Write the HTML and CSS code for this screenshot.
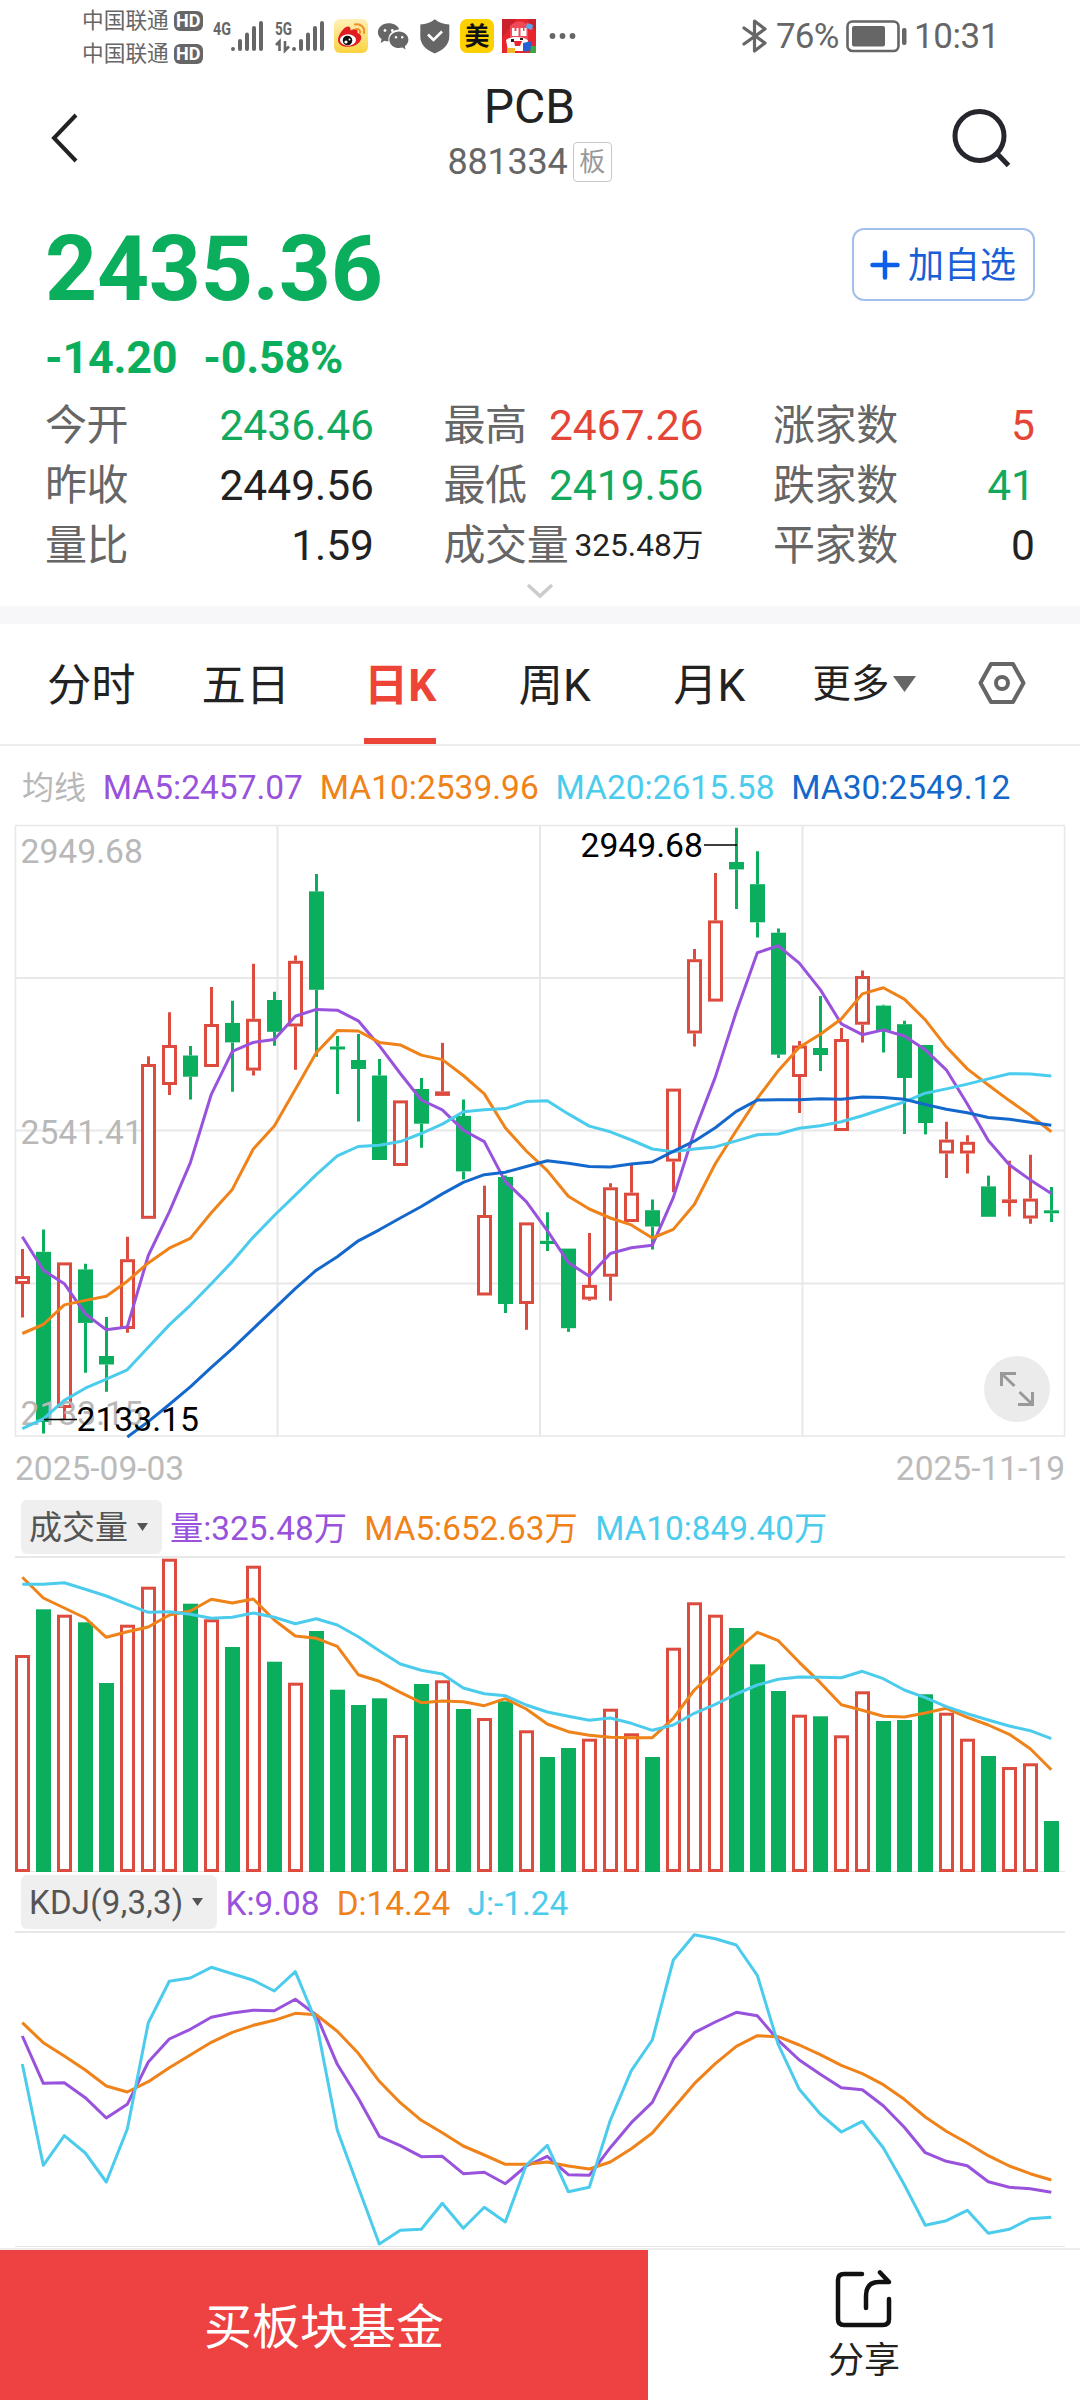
FILE: index.html
```html
<!DOCTYPE html>
<html lang="zh-CN">
<head>
<meta charset="utf-8">
<title>PCB 881334</title>
<link rel="stylesheet" href="styles.css">
</head>
<body>
<div class="screen">
  <div class="status">
    <div class="carriers">
      <div class="carrier">中国联通<span class="hd">HD</span></div>
      <div class="carrier">中国联通<span class="hd">HD</span></div>
    </div>
    <svg class="status-icons" width="370" height="72" viewBox="210 0 370 72">
      <g class="net">
        <text x="213" y="35" textLength="18" lengthAdjust="spacingAndGlyphs">4G</text>
        <text x="275" y="35" textLength="17" lengthAdjust="spacingAndGlyphs">5G</text>
      </g>
      <g class="signal">
        <path d="M233 49v0M240 41v8M247 34.500v14.500M254 28v21M261 23v26"/>
        <path d="M294 49v0M301 41v8M308 34.500v14.500M315 28v21M322 23v26"/>
      </g>
      <path class="thin" d="M276 45l3.500-3.500V51M285 41v9.500l4-4"/>
      <defs>
        <linearGradient id="gold" x1="0" y1="0" x2="0" y2="1"><stop offset="0" stop-color="#fff0b8"/><stop offset="1" stop-color="#fbd33f"/></linearGradient>
      </defs>
      <rect x="334" y="19" width="34" height="34" rx="6" fill="url(#gold)"/>
      <path fill="#e01c20" d="M346 27c3-1.500 5 0 4.500 3.500 4-2 8-1.500 7 2.500 5 1.500 5 7 .5 10.500-6 5-19.500 4.500-20-3-.2-4.500 4-11 8-13.500z"/>
      <ellipse cx="348" cy="40" rx="8" ry="5.800" fill="#fff"/>
      <circle cx="347.500" cy="40.500" r="4.800" fill="#111"/><circle cx="346" cy="42" r="1.600" fill="#fff"/><circle cx="349.500" cy="39.500" r="1" fill="#fff"/>
      <path fill="none" stroke="#f0902c" stroke-width="2" stroke-linecap="round" d="M355 24.500c6-1 10 3 9 8.500M356 29c3-.5 4.500 1.500 4 4"/>
      <path class="gray" d="M388.500 23.200c-6 0-10.600 4-10.600 9 0 2.800 1.400 5.200 3.700 6.900l-1 3.800 4-2.200c1.200.4 2.500.5 3.900.5-.9-6.500 4-11.500 10.700-11.600-.9-3.800-5.300-6.400-10.700-6.400z"/>
      <path class="gray" d="M399 31.500c-5.500 0-9.600 3.700-9.600 8.300 0 4.600 4.300 8.300 9.600 8.300 1.200 0 2.300-.2 3.400-.5l3.200 1.900-.8-3.300c2.200-1.500 3.600-3.800 3.600-6.400 0-4.600-4-8.300-9.400-8.300z"/>
      <g fill="#fff"><circle cx="385" cy="30.500" r="1.400"/><circle cx="392.300" cy="30.500" r="1.400"/><circle cx="396" cy="37.200" r="1.200"/><circle cx="402.200" cy="37.200" r="1.200"/></g>
      <path class="gray" d="M434.800 19.200c4 3.300 8.800 5 14.500 5.400v12c0 8-6 13.500-14.500 16.900-8.500-3.400-14.500-8.900-14.500-16.900v-12c5.700-.4 10.500-2.100 14.500-5.400z"/>
      <path fill="none" stroke="#fff" stroke-width="2.600" d="M428 34.500l5.500 5.500 8.500-8.500"/>
      <rect x="460" y="19" width="34" height="34" rx="7" fill="#fdd000"/>
      <text class="mei" x="477" y="45" text-anchor="middle">美</text>
      <rect x="502" y="19" width="34" height="34" fill="#e8242c"/>
      <path fill="#c9222c" d="M502 19h14l-8 11-6 8zM527 19h9v12z"/>
      <path fill="#f04a58" d="M510 26c6-6 14-6 18 0v13h-18z"/>
      <path fill="#fff" d="M512 28h2.500v3h2v-3h2v8H512zM520.500 28h2.500v3h1.500v-3h2v8h-6z"/>
      <path fill="#fff" d="M506 40c4-4 16-4 22 0l-2 11h-18z"/>
      <path fill="#e8242c" d="M514 41h8l-2 5h-5z"/><path fill="#222" d="M511 39h3v3h-3zM520 38h3v2h-3z"/>
      <path fill="#2360d0" d="M523 43l9-2v9l-9 2z"/><path fill="#58a8ee" d="M527 23l6 2-1 5-6-2z"/><path fill="#39a845" d="M531 46h5v7h-6z"/><path fill="#f2b929" d="M507 48h8v5h-8z"/>
      <g class="gray"><circle cx="552.500" cy="36" r="2.900"/><circle cx="562.500" cy="36" r="2.900"/><circle cx="572.500" cy="36" r="2.900"/></g>
    </svg>
    <div class="status-right">
      <svg width="26" height="36" viewBox="0 0 26 36"><path fill="none" stroke="#666" stroke-width="3.200" stroke-linejoin="round" stroke-linecap="round" d="M2 10l21 15-10.500 8V3L23 11 2 26"/></svg>
      <span class="pct">76%</span>
      <svg class="battery" width="62" height="36" viewBox="0 0 62 36"><rect x="1.500" y="3.500" width="51" height="29.500" rx="5" fill="none" stroke="#666" stroke-width="2.600"/><rect x="6" y="8" width="33" height="20.500" rx="2" fill="#666"/><rect x="56" y="10" width="4.500" height="17" rx="2" fill="#666"/></svg>
      <span class="time">10:31</span>
    </div>
  </div>

  <header class="header">
    <svg class="back" width="34" height="56" viewBox="0 0 34 56"><path fill="none" stroke="#222" stroke-width="4" d="M29 5L7 28l22 23"/></svg>
    <div class="title-block">
      <div class="title">PCB</div>
      <div class="sub">881334<span class="badge">板</span></div>
    </div>
    <svg class="search" width="66" height="66" viewBox="0 0 66 66"><circle cx="31.500" cy="31" r="24.500" fill="none" stroke="#26272e" stroke-width="5"/><path stroke="#26272e" stroke-width="5" d="M48 47.500L60.500 60.500"/></svg>
  </header>

  <section class="quote">
    <div class="price-row">
      <div class="price">2435.36</div>
      <div class="add"><svg width="30" height="30" viewBox="0 0 30 30"><path stroke="#0b5fe8" stroke-width="4.500" stroke-linecap="round" d="M15 2.500v25M2.500 15h25"/></svg><span>加自选</span></div>
    </div>
    <div class="change"><span>-14.20</span><span>-0.58%</span></div>
    <div class="stats">
      <div class="stat"><span>今开</span><b class="down">2436.46</b></div>
      <div class="stat"><span>最高</span><b class="up">2467.26</b></div>
      <div class="stat"><span>涨家数</span><b class="up">5</b></div>
      <div class="stat"><span>昨收</span><b>2449.56</b></div>
      <div class="stat"><span>最低</span><b class="down">2419.56</b></div>
      <div class="stat"><span>跌家数</span><b class="down">41</b></div>
      <div class="stat"><span>量比</span><b>1.59</b></div>
      <div class="stat"><span>成交量</span><b class="small">325.48万</b></div>
      <div class="stat"><span>平家数</span><b>0</b></div>
    </div>
    <div class="more-row"><svg width="30" height="18" viewBox="0 0 30 18"><path fill="none" stroke="#ccc" stroke-width="3.600" d="M3 3l12 11L27 3"/></svg></div>
  </section>

  <nav class="tabs">
    <div class="tab">分时</div>
    <div class="tab">五日</div>
    <div class="tab active">日K</div>
    <div class="tab">周K</div>
    <div class="tab">月K</div>
    <div class="tab-more"><span>更多</span><svg width="23" height="16" viewBox="0 0 23 16"><path fill="#666" d="M0 0h23L11.500 16z"/></svg></div>
    <svg class="gear" width="48" height="44" viewBox="0 0 48 44"><g fill="none" stroke="#666" stroke-width="4"><path stroke-linejoin="round" d="M13 3h22l10.500 19L35 41H13L2.500 22z"/><circle cx="24" cy="22" r="6"/></g></svg>
  </nav>

  <div class="legend">
    <span class="muted">均线</span><span class="purple">MA5:2457.07</span><span class="orange">MA10:2539.96</span><span class="cyan">MA20:2615.58</span><span class="blue">MA30:2549.12</span>
  </div>

  <div class="kchart">
    <svg width="1080" height="620" viewBox="0 0 1080 620">
      <path class="grid-line" d="M15.500 158H1064.500M15.500 310.500H1064.500M15.500 463.500H1064.500M277.500 5.500V616M540 5.500V616M802.500 5.500V616"/>
      <rect class="frame" x="15.500" y="5.500" width="1049" height="610.500"/>
      <g id="candles"></g>
      <g class="axis">
        <text x="20.500" y="42.500">2949.68</text>
        <text x="20.500" y="324">2541.41</text>
        <text x="20.500" y="605">2133.15</text>
      </g>
      <g id="averages"></g>
      <path class="mark" d="M704 25h33M44 599.500h33"/>
      <g class="extreme">
        <text x="580.500" y="37">2949.68</text>
        <text x="76.500" y="610.500">2133.15</text>
      </g>
    </svg>
    <div class="expand"><svg width="38" height="38" viewBox="0 0 38 38"><path fill="none" stroke="#999" stroke-width="3" d="M3.500 16V3.500H18M4 4l12.500 12M34.500 22v12.500H20M34 34L21.500 22"/></svg></div>
  </div>
  <div class="dates"><span>2025-09-03</span><span>2025-11-19</span></div>

  <div class="ind-head">
    <div class="tag">成交量<svg width="11" height="8" viewBox="0 0 11 8"><path fill="#555" d="M0 0h11L5.500 8z"/></svg></div>
    <div class="vals vol"><span class="purple">量:325.48万</span><span class="orange">MA5:652.63万</span><span class="cyan">MA10:849.40万</span></div>
  </div>
  <svg class="ind" width="1080" height="319" viewBox="0 -1 1080 319">
    <path class="grid-line" d="M15 0H1065"/><path class="base-line" d="M15 314.500H1065"/>
    <g id="volume"></g>
  </svg>

  <div class="ind-head">
    <div class="tag tag-kdj">KDJ(9,3,3)<svg width="11" height="8" viewBox="0 0 11 8"><path fill="#555" d="M0 0h11L5.500 8z"/></svg></div>
    <div class="vals kdj"><span class="purple">K:9.08</span><span class="orange">D:14.24</span><span class="cyan">J:-1.24</span></div>
  </div>
  <svg class="ind" width="1080" height="317" viewBox="0 -1 1080 317">
    <path class="grid-line" d="M15 0H1065"/><path class="base-line" d="M15 314.500H1065"/>
    <g id="kdj"></g>
  </svg>

  <footer class="footer">
    <div class="buy">买板块基金</div>
    <div class="share">
      <svg width="60" height="60" viewBox="0 0 60 60"><path fill="none" stroke="#111" stroke-width="4.500" stroke-linecap="round" stroke-linejoin="round" d="M28 5H10q-6 0-6 6v39q0 6 6 6h39q6 0 6-6V30M32 39V27q0-14 13-14h10L46 3.500"/></svg>
      <span>分享</span>
    </div>
  </footer>
</div>
<script src="chart.js"></script>
</body>
</html>
```
FILE: styles.css
```css
* { box-sizing: border-box; }
body { margin: 0; background: #fff; font-family: Roboto, "Noto Sans CJK SC", sans-serif; color: #222; }
svg { display: block; flex: none; }
.screen { width: 1080px; height: 2400px; overflow: hidden; background: #fff; }

.status { height: 72px; display: flex; color: #666; }
.carriers { width: 210px; padding: 4px 0 0 82px; }
.carrier { display: flex; align-items: center; height: 33px; font-size: 21.7px; line-height: 33px; white-space: nowrap; }
.hd { margin-left: 5px; width: 29px; height: 20px; border-radius: 6px; background: #666; color: #fff; font-size: 18px; font-weight: 700; line-height: 20px; text-align: center; }
.net text { font-size: 19px; font-weight: 700; fill: #666; }
.signal { fill: none; stroke: #666; stroke-width: 4; stroke-linecap: round; }
.thin { fill: none; stroke: #666; stroke-width: 2.6; }
.gray { fill: #666; }
.mei { font-size: 25px; font-weight: 700; fill: #111; }
.status-right { display: flex; align-items: center; margin-left: 162px; font-size: 35px; line-height: 72px; }
.pct { margin-left: 8px; padding-top: 2px; width: 62px; letter-spacing: -0.8px; white-space: nowrap; }
.battery { margin-left: 8px; }
.time { margin-left: 6px; padding-top: 2px; letter-spacing: -0.4px; }

.header { height: 140px; display: grid; grid-template-columns: 120px 1fr 141px; }
.back { margin: 38px 0 0 47px; }
.title-block { text-align: center; padding-top: 7px; }
.title { font-size: 48px; line-height: 56px; }
.sub { display: flex; justify-content: center; align-items: center; height: 44px; margin-top: 5px; font-size: 36px; line-height: 46px; color: #666; letter-spacing: -0.2px; }
.badge { margin-left: 5px; width: 39px; height: 40px; border: 1.5px solid #c8c8c8; border-radius: 4px; color: #999; font-size: 26px; line-height: 39px; text-align: center; }
.search { margin: 33px 0 0 9px; }

.quote { height: 394px; padding: 11px 45px 0; }
.price-row { display: flex; justify-content: space-between; }
.price { font-size: 91px; line-height: 92px; height: 90px; font-weight: 700; color: #0aae5c; letter-spacing: -0.3px; }
.add { display: flex; align-items: center; gap: 8px; width: 183px; height: 73px; margin-top: 5px; padding-left: 16px; border: 2px solid #a3bfec; border-radius: 12px; color: #1a5fd6; font-size: 36px; line-height: 70px; white-space: nowrap; }
.add span { padding-top: 3px; }
.change { display: flex; gap: 26px; margin-top: 19px; font-size: 45px; line-height: 52px; height: 50px; font-weight: 700; color: #0aae5c; letter-spacing: -0.3px; }
.stats { display: grid; grid-template-columns: 329px 260px 262px; column-gap: 69.5px; margin-top: 12px; }
.stat { display: flex; justify-content: space-between; height: 60px; font-size: 42px; line-height: 63px; white-space: nowrap; }
.stat span { color: #666; letter-spacing: -0.4px; }
.stat b { font-weight: 400; font-size: 42.5px; }
.stat .small { font-size: 31.7px; }
.up { color: #e54537; }
.down { color: #12a95d; }
.more-row { display: flex; justify-content: center; padding-top: 8px; }

.tabs { display: flex; height: 140px; border-top: 18px solid #f7f7fa; border-bottom: 2px solid #ededed; padding-left: 14px; font-size: 44.3px; line-height: 124px; }
.tab { flex: 0 0 154.5px; height: 120px; text-align: center; }
.active { color: #ee4437; font-weight: 700; background: linear-gradient(#ee4437, #ee4437) 50% 100% / 72px 6px no-repeat; }
.tab-more { display: flex; align-items: center; height: 120px; gap: 4px; margin-left: 26px; width: 165px; font-size: 38.4px; }
.gear { margin-top: 37px; }

.legend { display: flex; gap: 16.8px; height: 74px; padding: 8px 0 0 22px; font-size: 33.5px; line-height: 68px; white-space: nowrap; }
.muted { color: #b8b8b8; font-size: 32px; }
.purple { color: #9852dc; }
.orange { color: #ef8218; }
.cyan { color: #4bccec; }
.blue { color: #1468cc; }

.kchart { position: relative; height: 620px; }
.grid-line { stroke: #e8e8e8; stroke-width: 2; fill: none; }
.base-line { stroke: #e4e4e4; stroke-width: 1; }
.frame { stroke: #e8e8e8; stroke-width: 1.5; fill: none; }
.axis text { font-size: 33.7px; fill: #b8b8b8; }
.extreme text { font-size: 33.7px; fill: #000; }
.mark { stroke: #000; stroke-width: 1.5; }
.rise { stroke: #dc4b3e; fill: none; }
.rise-body { stroke: #dc4b3e; fill: #fff; stroke-width: 3; }
.rise-flat { fill: #dc4b3e; }
.fall { stroke: #0aae5c; fill: none; }
.fall-body { fill: #0aae5c; }
.wick { stroke-width: 3; }
.line { fill: none; stroke: currentColor; stroke-width: 3; stroke-linejoin: round; }
.expand { position: absolute; left: 984px; top: 536px; width: 66px; height: 66px; border-radius: 50%; background: #ebebeb; display: grid; place-items: center; }

.dates { display: flex; justify-content: space-between; height: 60px; padding: 0 15px 0 15px; font-size: 33.5px; line-height: 57px; color: #bbb; }
.ind-head { display: flex; align-items: flex-start; height: 56px; padding-left: 21px; font-size: 33.3px; line-height: 57px; white-space: nowrap; }
.tag { display: flex; align-items: center; gap: 9px; height: 54px; padding: 0 14px 0 8px; border-radius: 6px; background: #efefef; color: #555; font-size: 33px; }
.tag-kdj { letter-spacing: 0.25px; padding-right: 14px; }
.vals { display: flex; gap: 17.3px; margin-left: 8px; }

.footer { display: flex; height: 152px; border-top: 2px solid #ededed; }
.buy { width: 648px; background: #ee4141; color: #fff; font-size: 48px; line-height: 156px; text-align: center; }
.share { flex: 1; display: flex; flex-direction: column; align-items: center; padding-top: 19px; font-size: 36px; line-height: 54px; }
.share span { margin-top: 5px; }
```
FILE: chart.js
```js
const NS = 'http://www.w3.org/2000/svg';
const X0 = 22.3, STEP = 21, W = 15;
const cx = i => X0 + STEP * i;

function add(parent, tag, attrs) {
  const el = document.createElementNS(NS, tag);
  for (const k in attrs) el.setAttribute(k, attrs[k]);
  parent.appendChild(el);
}
function box(parent, i, rise, top, bottom) {
  const x = Math.round(cx(i) - W / 2);
  const h = Math.max(bottom - top, 3);
  if (rise && h > 5) add(parent, 'rect', { class: 'rise-body', x: x + 1.5, y: top + 1.5, width: W - 3, height: h - 3 });
  else add(parent, 'rect', { class: rise ? 'rise-flat' : 'fall-body', x, y: top, width: W, height: h });
}
function line(parent, color, values, first = 0) {
  const points = values.map((v, i) => cx(i + first).toFixed(1) + ',' + v).join(' ');
  add(parent, 'polyline', { class: 'line ' + color, points });
}

// Candles: [rise, high, body top, body bottom, low]
const candles = [
  [1,429,456,464,497.5],[0,409.4,431.8,602,613.5],[1,442.4,442.4,588,599],[0,443.7,449.4,502.9,552.7],[0,497,536,544.5,571.8],
  [1,416.7,439.2,509,512.7],[1,236.3,244,398.8,398.8],[1,192.2,225,265,275],[0,226,235.5,256.7,279.6],[1,167,204,247,247],
  [0,180.8,202.9,222.4,271.8],[1,143.7,198.8,250.6,255.5],[0,171.8,180,211.8,225.7],[1,135.5,140.8,206.5,249.8],[0,53.9,71.4,169.8,236.7],
  [0,216,226.5,229,273.9],[0,213.9,240,249,301.6],[0,239,255.5,340,340],[1,280.4,280.4,346,346],[0,258,269,303.7,327.8],
  [1,222.9,271.4,275.9,275.9],[0,279.6,295.9,351.4,359.6],[1,365.7,395,475.5,475.5],[0,355.5,357,484,493],[1,402.4,402.4,484,509.8],
  [0,392.2,420.8,424,431],[0,428.6,428.6,508.2,511.8],[1,413,464.9,479.6,480.8],[1,363.3,367.3,456.7,480.8],[1,344.9,372.7,402,402],
  [0,379.6,390.2,406.5,429.4],[1,268.6,268.6,341.6,372.2],[1,129,139.2,213.5,226.5],[1,53,100.4,181.6,181.6],[0,7.8,42,49.4,88.9],
  [0,31.2,64.2,102.3,117.5],[0,108.4,112.7,234.6,238],[1,221,225.5,257,293],[0,176,228,235,251],[1,208,219,311,311],
  [1,150.5,156,204.7,222.5],[0,184.7,185.6,211,232.4],[0,200.8,204.2,258,314],[0,225,225,303,314.4],[1,301.8,319.6,333.5,358],
  [1,315.3,321.8,333.5,353.4],[0,355.6,366.4,396.8,396.8],[1,340.8,379.4,383,396.4],[1,334.8,378.6,398.5,403.7],[0,366.9,390.3,393.3,402]
];
const kline = document.getElementById('candles');
candles.forEach(([rise, high, top, bottom, low], i) => {
  const x = Math.round(cx(i) - 0.5) + 0.5;
  add(kline, 'path', { class: 'wick ' + (rise ? 'rise' : 'fall'), d: `M${x} ${high}V${top}M${x} ${bottom}V${low}` });
  box(kline, i, rise, top, bottom);
});
const averages = document.getElementById('averages');
line(averages, 'purple', [416.7,450.2,463.7,493.9,509.8,506.9,435.5,391.8,342.9,274.3,231.4,222.4,219.6,196.3,189.4,190.2,200.8,225.7,253.5,280,289.8,310.2,321.6,361.6,381.6,410.6,442.4,456.3,433.5,427.8,425.3,377.6,311.8,257.1,191.7,132.7,125.8,143.1,169.6,203.8,214.7,209.9,216,229.8,249.8,284,320.5,344.8,359.9,373.4]);
line(averages, 'orange', [513.5,504.5,484.9,480.4,476.3,461.2,442.9,428.2,418.4,392.7,369.4,329,306.1,269.4,232.7,210.6,211,222.4,224.9,235.1,239.6,255.5,273.9,307.8,331,350.6,376.3,389,398,404.9,418,409.4,384.5,343.7,310.5,278.4,250.7,227.2,214.2,199,173.9,167.8,179.1,199.9,226.8,248.9,265,280.6,295.3,311.8]);
line(averages, 'cyan', [608.6,598.8,580.4,568.2,559.2,549.8,527.3,504.9,485.3,463.7,441.6,417.1,395.5,375.1,354.7,335.9,326.5,325.3,321.6,313.5,304.1,291.8,289.8,288.6,281.6,280.8,293.9,306.1,311.8,320,329,331.8,329,326.9,320.9,314.8,314,308.3,305.7,301.8,295.7,288.8,281.9,273.2,268.9,264.1,258.9,253.7,254.1,255.9]);
line(averages, 'blue', [617,601.6,584.5,566.9,547.3,528.6,508.6,488.6,468.6,450.2,436.7,420.8,409.8,398,386.5,373.9,362.4,354.7,352.2,346.5,340.8,343.3,346.5,346.9,344.1,342,331.4,321.2,307.8,291.4,280.1,279.7,279.7,278.8,279.3,277.1,277.5,279.3,284.5,289.2,292.7,297.5,299.2,302.3,305.3], 5);

// Volume bars: [rise, top]
const bars = [
  [1,98],[0,52.3],[1,57.7],[0,65.3],[0,126],[1,67.7],[1,29.7],[1,1.7],[0,46.7],[1,62.3],
  [0,90],[1,8.7],[0,104.7],[1,125.7],[0,74],[0,132.7],[0,148],[0,141.3],[1,178],[0,127],
  [1,123.3],[0,152],[1,161],[0,144.3],[1,173.3],[0,200],[0,191],[1,181.7],[1,151.7],[1,176.3],
  [0,200],[1,90.7],[1,45.3],[1,57.7],[0,71],[0,107.3],[0,134],[1,157.7],[0,159.3],[1,178.3],
  [1,134.3],[0,164],[0,163],[0,137.3],[1,155.7],[1,181.7],[0,199],[1,210],[1,206.3],[0,264]
];
const volume = document.getElementById('volume');
bars.forEach(([rise, top], i) => box(volume, i, rise, top, 315));
line(volume, 'orange', [20.3,41,51,61,80.3,74.7,70,58,54,42.3,46,42,63,79,81.3,89.3,117.7,124.3,135.3,145.7,144,144.7,148.7,141.7,152,167,174.7,178.3,180.3,180.7,180.7,161.3,133,114,93.3,75.3,83.7,105.3,125.7,147.7,153.3,159.3,160,156,151.3,160.3,168,177.3,191.7,212.7]);
line(volume, 'cyan', [27.3,27.3,25.7,32.3,39,47.3,55.3,54.7,57.3,61.3,60.3,56,60.3,66.7,61.7,68,79.7,93.7,107,113.3,117,131,136.7,138.7,148,155,159.3,163.3,161,166.3,173.3,168,156.3,147.3,137,128,122.3,120,120.3,120.7,114.3,121.7,133,140.7,149.7,156.7,163,169,173.7,181.7]);

const kdj = document.getElementById('kdj');
line(kdj, 'purple', [104,151.3,150.7,165.7,186,172.3,130,107,97.3,85.3,81,78.3,78.7,67.3,83,132.3,166.3,204.3,213.7,224.7,224.3,241.7,240.3,251.7,234,224.3,242.7,243.3,215.7,190.7,170.3,127.3,100.7,90,80.3,83.7,108.3,128,142.3,155.7,157.7,173.7,195.3,220.7,229.3,233.7,249.7,255.3,256.7,260.3]);
line(kdj, 'orange', [90.7,110.7,124,138,154,160,149.7,135.7,123,110.3,100.3,93.3,88.3,81.3,82.7,99.3,121.3,149.3,170.7,188.3,200.7,214,223,232.3,232.3,230,234,237,230,216.7,201,176.3,151.7,131.7,114.3,103.7,104.7,113,122.7,133.3,141.7,152.7,167.3,185,199.3,211,223.7,234,241.7,248]);
line(kdj, 'cyan', [132,233.3,203.7,221,250,197,90.7,49.3,46,35.3,41.7,48.3,59,39.7,90,198.3,255.3,312,298.3,297.3,271.3,296.3,275.3,290,233,213.3,259.7,255.3,188.3,138.7,108,28,2.7,6.7,13,43.3,112.7,157.3,182,200,189.3,215.7,252.7,293.3,288.7,278.3,301.3,297.3,286.7,285.3]);
```
